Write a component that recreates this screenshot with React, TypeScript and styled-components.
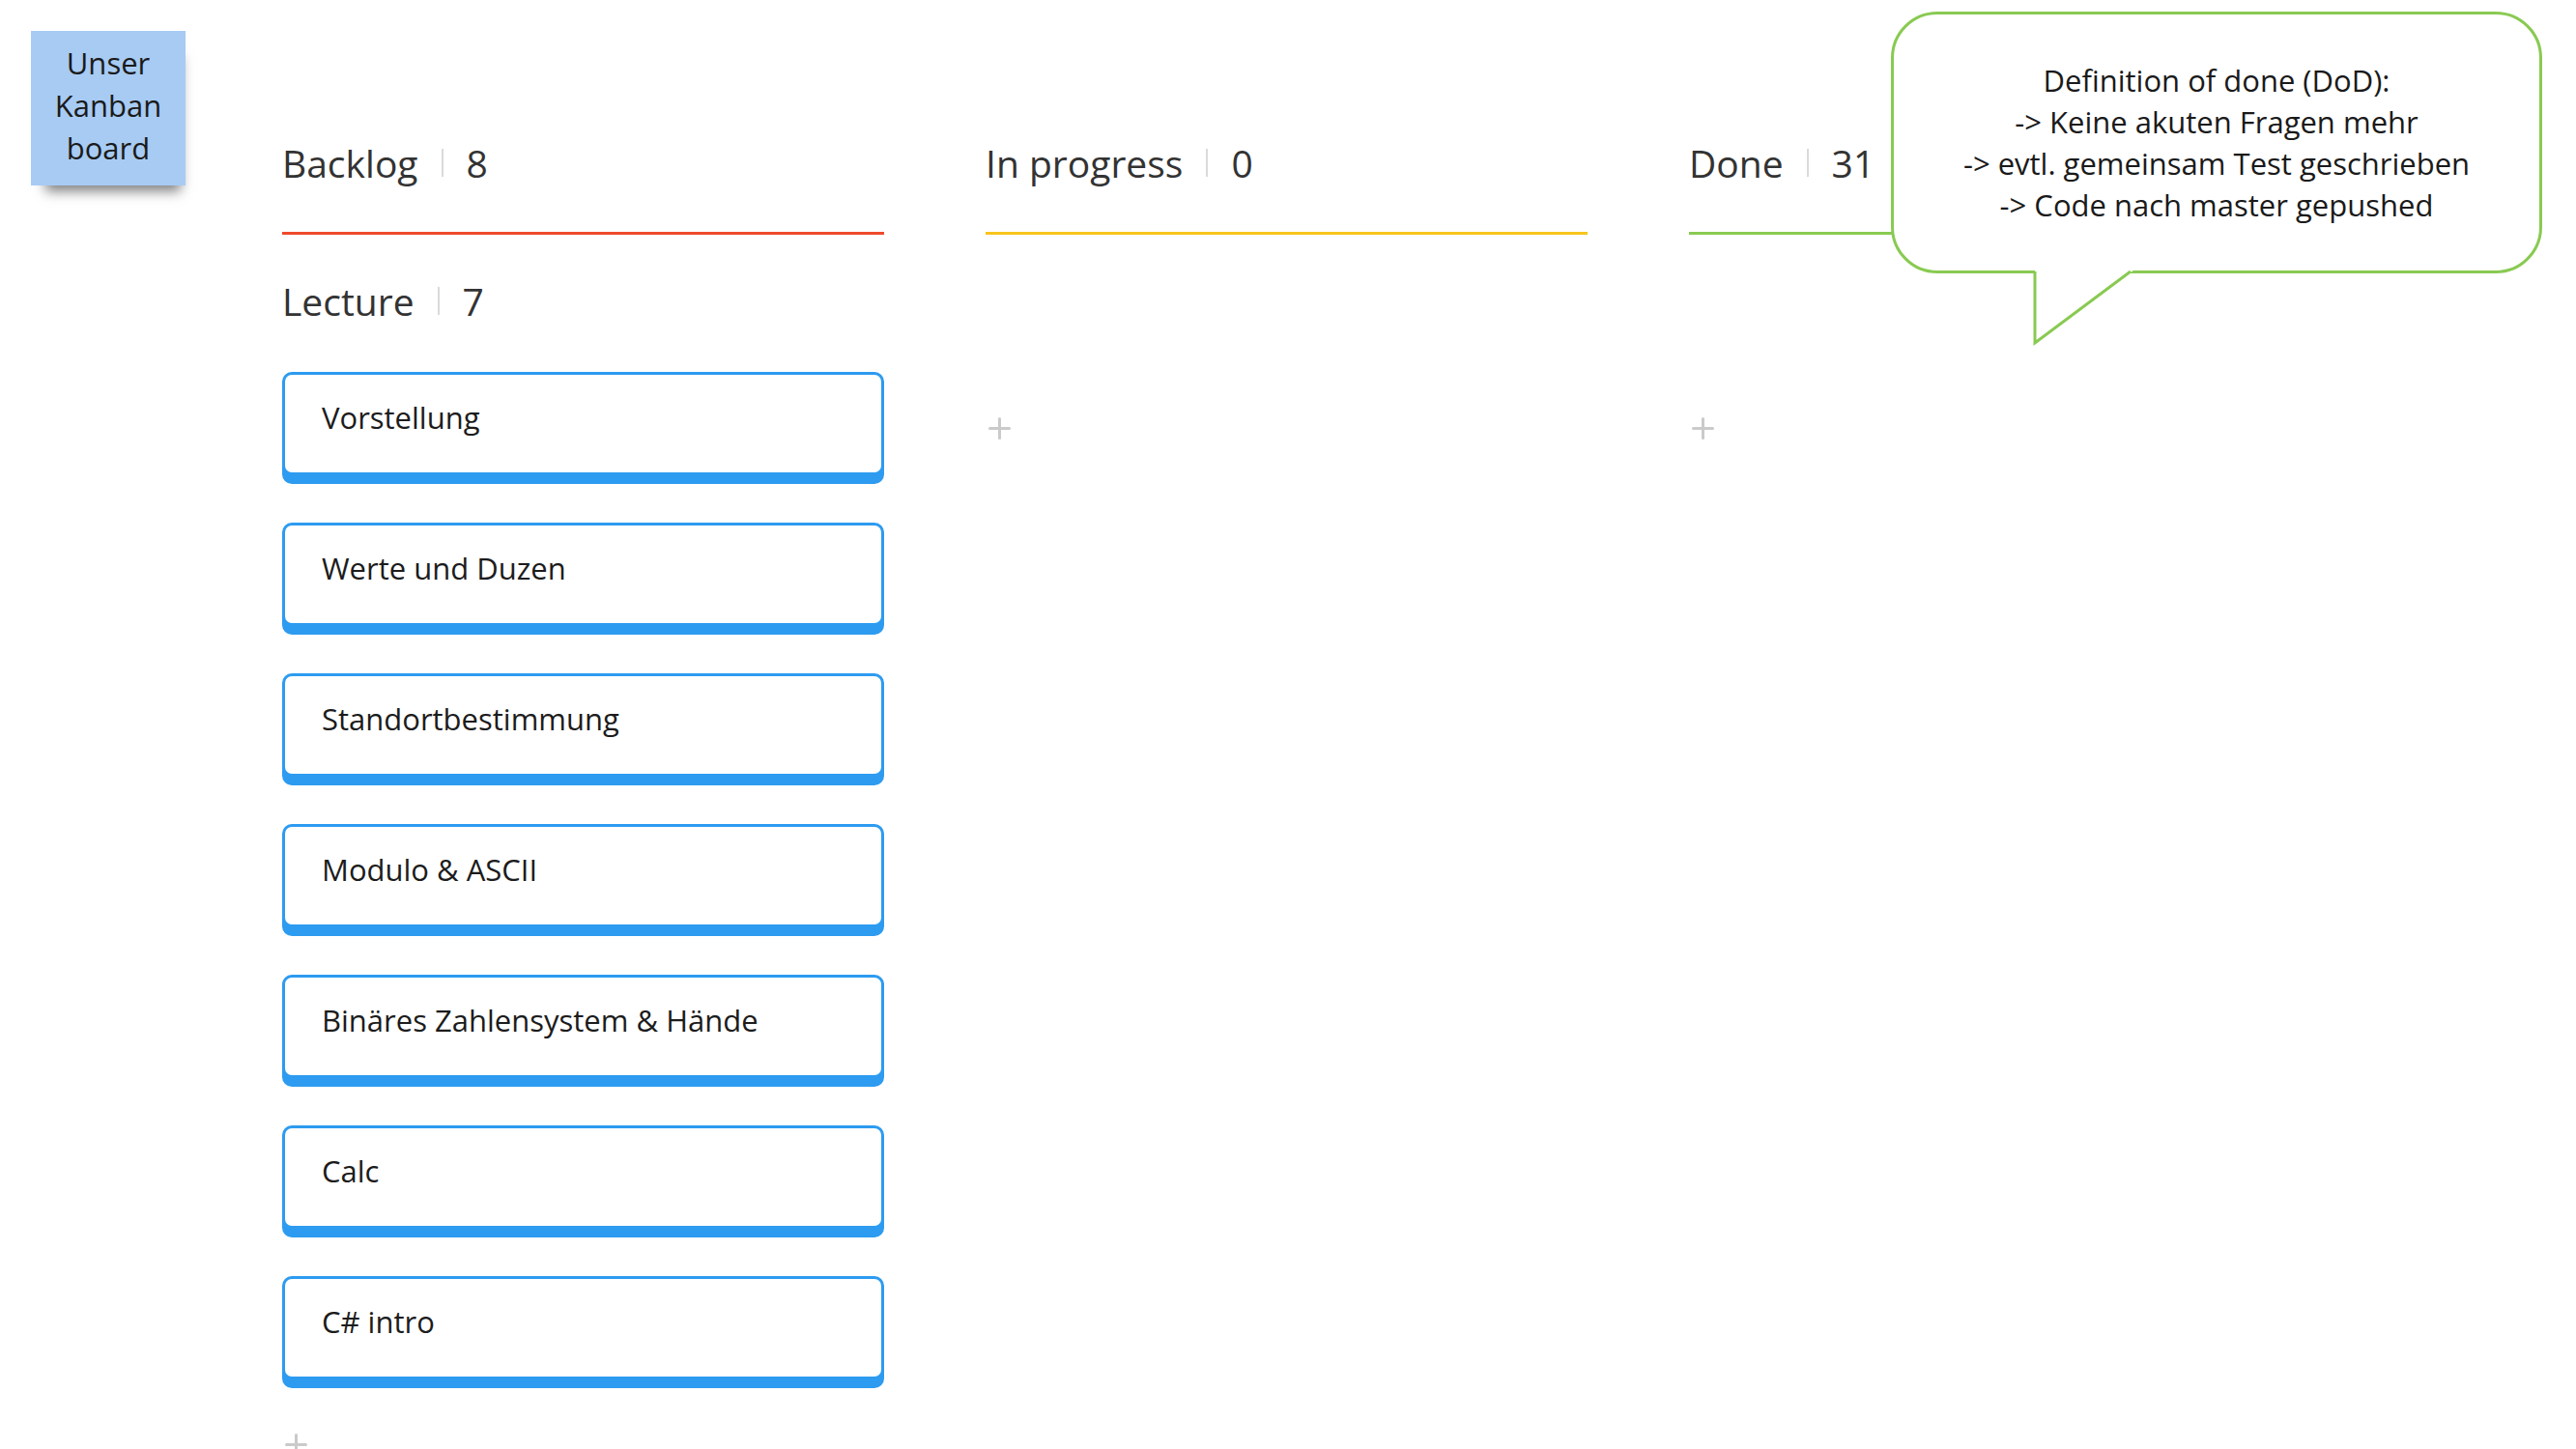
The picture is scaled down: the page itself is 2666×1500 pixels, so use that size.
import styled, { createGlobalStyle } from 'styled-components'

const GlobalStyle = createGlobalStyle`
  html, body {
    margin: 0;
    padding: 0;
    background: #fff;
    overflow: hidden;
  }
  body {
    font-family: 'Open Sans', 'Liberation Sans', sans-serif;
    color: #1c1c1c;
  }
`

const Page = styled.div`
  position: relative;
  display: flex;
  align-items: flex-start;
  padding: 32px 0 0 32px;
  width: 2666px;
  height: 1500px;
  box-sizing: border-box;
`

const Sticky = styled.div`
  width: 160px;
  height: 160px;
  flex-shrink: 0;
  box-sizing: border-box;
  padding-bottom: 6px;
  background: #a7cbf3;
  box-shadow: 5px 16px 12px -10px rgba(0, 0, 0, 0.5);
  display: flex;
  align-items: center;
  justify-content: center;
  text-align: center;
  font-size: 31px;
  line-height: 44px;
  color: #1a1a1a;
`

const Board = styled.div`
  margin-left: 100px;
  padding-top: 110px;
  display: grid;
  grid-template-columns: repeat(3, 623px);
  column-gap: 105px;
  align-items: start;
`

const ColumnHeader = styled.div<{ $color: string }>`
  display: flex;
  align-items: center;
  gap: 24px;
  height: 52px;
  padding-bottom: 46px;
  border-bottom: 3px solid ${(p) => p.$color};
  font-size: 39px;
  color: #333;
`

const Divider = styled.span`
  width: 2px;
  height: 29px;
  background: #dadada;
`

const LaneTitle = styled.div`
  grid-column: 1;
  margin-top: 42px;
  display: flex;
  align-items: center;
  gap: 24px;
  height: 52px;
  font-size: 39px;
  color: #333;
`

const LaneCell = styled.div`
  margin-top: 48px;
  display: flex;
  flex-direction: column;
  gap: 49px;
`

const Card = styled.div`
  height: 107px;
  box-sizing: border-box;
  border: 3px solid #2d9bf0;
  border-radius: 10px;
  box-shadow: 0 9px 0 #2d9bf0;
  background: #fff;
  padding: 23px 38px 0;
  font-size: 31px;
  color: #1c1c1c;
`

const EmptySlot = styled.div`
  height: 116px;
  display: flex;
  align-items: center;
`

const AddButton = styled.span<{ $offset?: number }>`
  position: relative;
  display: block;
  width: 23px;
  height: 23px;
  margin-left: 3px;
  margin-top: ${(p) => p.$offset ?? 0}px;
  &::before,
  &::after {
    content: '';
    position: absolute;
    background: #cacaca;
    border-radius: 2px;
  }
  &::before {
    left: 0;
    right: 0;
    top: 10px;
    height: 3px;
  }
  &::after {
    top: 0;
    bottom: 0;
    left: 10px;
    width: 3px;
  }
`

const Bubble = styled.div`
  position: absolute;
  left: 1957px;
  top: 12px;
  width: 674px;
  height: 271px;
  box-sizing: border-box;
  border: 3px solid #89ca52;
  border-radius: 48px;
  background: #fff;
  display: flex;
  flex-direction: column;
  align-items: center;
  justify-content: center;
  font-size: 31px;
  line-height: 43px;
  color: #1a1a1a;
  text-align: center;
`

const Tail = styled.svg`
  position: absolute;
  left: 136px;
  top: 261px;
`

const columns = [
  { title: 'Backlog', count: 8, color: '#ee4a2c' },
  { title: 'In progress', count: 0, color: '#f6c51c' },
  { title: 'Done', count: 31, color: '#89ca52' },
]

const cards = [
  'Vorstellung',
  'Werte und Duzen',
  'Standortbestimmung',
  'Modulo & ASCII',
  'Binäres Zahlensystem & Hände',
  'Calc',
  'C# intro',
]

const dod = [
  'Definition of done (DoD):',
  '-> Keine akuten Fragen mehr',
  '-> evtl. gemeinsam Test geschrieben',
  '-> Code nach master gepushed',
]

export default function App() {
  return (
    <Page>
      <GlobalStyle />
      <Sticky>
        Unser
        <br />
        Kanban
        <br />
        board
      </Sticky>
      <Board>
        {columns.map((c) => (
          <ColumnHeader key={c.title} $color={c.color}>
            <span>{c.title}</span>
            <Divider />
            <span>{c.count}</span>
          </ColumnHeader>
        ))}
        <LaneTitle>
          <span>Lecture</span>
          <Divider />
          <span>7</span>
        </LaneTitle>
        <LaneCell style={{ gridColumn: 1 }}>
          {cards.map((t) => (
            <Card key={t}>{t}</Card>
          ))}
          <AddButton $offset={7} />
        </LaneCell>
        <LaneCell style={{ gridColumn: 2, gridRow: 3 }}>
          <EmptySlot>
            <AddButton />
          </EmptySlot>
        </LaneCell>
        <LaneCell style={{ gridColumn: 3, gridRow: 3 }}>
          <EmptySlot>
            <AddButton />
          </EmptySlot>
        </LaneCell>
      </Board>
      <Bubble>
        {dod.map((l) => (
          <div key={l}>{l}</div>
        ))}
        <Tail width="120" height="84" viewBox="0 0 120 84">
          <polygon points="10,1 10,79 109,6 116,1" fill="#fff" />
          <polyline points="10,5 10,79 109,5" fill="none" stroke="#89ca52" strokeWidth="3" />
        </Tail>
      </Bubble>
    </Page>
  )
}
